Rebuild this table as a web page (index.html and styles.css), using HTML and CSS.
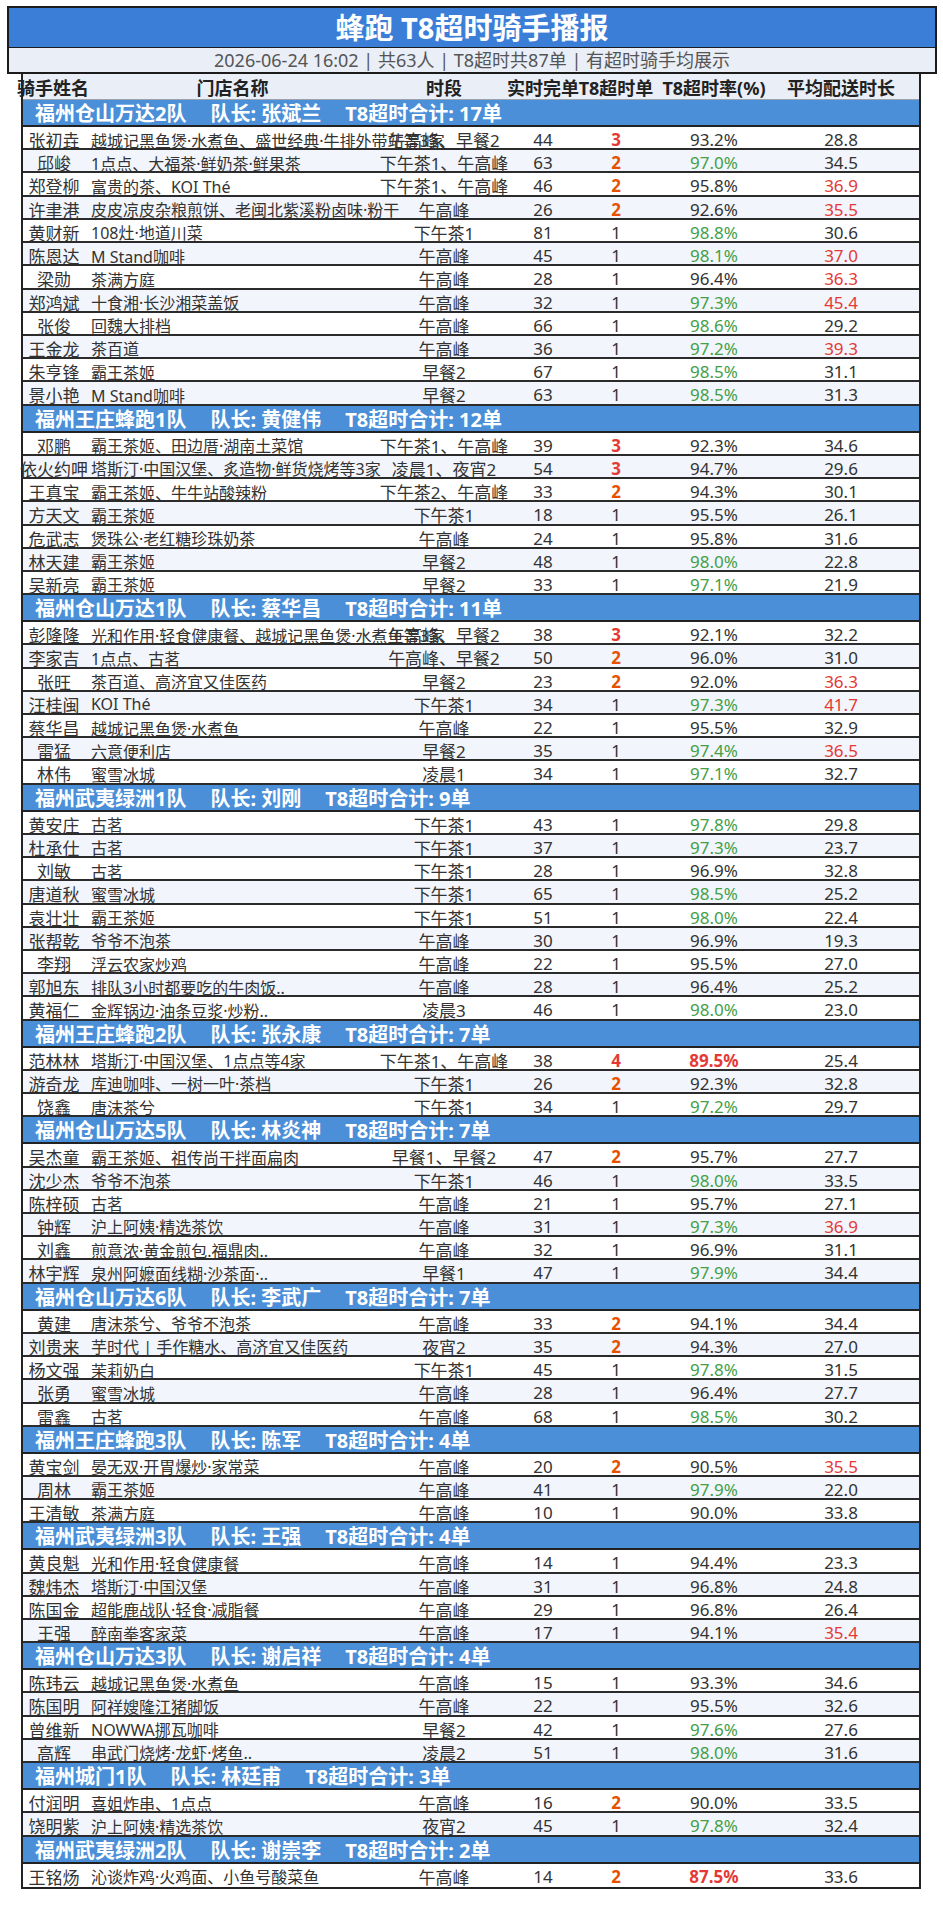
FILE: index.html
```html
<!DOCTYPE html>
<html lang="zh-CN">
<head>
<meta charset="utf-8">
<title>蜂跑 T8超时骑手播报</title>
<link rel="stylesheet" href="styles.css">
</head>
<body>
<div class="report">
  <div class="banner">
    <div class="title">蜂跑 T8超时骑手播报</div>
    <div class="subtitle">2026-06-24 16:02 | 共63人 | T8超时共87单 | 有超时骑手均展示</div>
  </div>
  <div class="table">
    <div class="head">
      <div class="c name"><span>骑手姓名</span></div>
      <div class="c store center"><span>门店名称</span></div>
      <div class="c time"><span>时段</span></div>
      <div class="c done"><span>实时完单</span></div>
      <div class="c t8"><span>T8超时单</span></div>
      <div class="c rate"><span>T8超时率(%)</span></div>
      <div class="c avg"><span>平均配送时长</span></div>
      <div class="c fill"></div>
    </div>

    <div class="group">
      <div class="team"><span>福州仓山万达2队</span><span>队长: 张斌兰</span><span>T8超时合计: 17单</span></div>
      <div class="row"><div class="c name"><span>张初垚</span></div><div class="c store"><span>越城记黑鱼煲·水煮鱼、盛世经典·牛排外带站等3家</span></div><div class="c time"><span>午高峰、早餐2</span></div><div class="c done"><span>44</span></div><div class="c t8 hi"><span>3</span></div><div class="c rate"><span>93.2%</span></div><div class="c avg"><span>28.8</span></div><div class="c fill"></div></div>
      <div class="row"><div class="c name"><span>邱峻</span></div><div class="c store"><span>1点点、大福茶·鲜奶茶·鲜果茶</span></div><div class="c time"><span>下午茶1、午高峰</span></div><div class="c done"><span>63</span></div><div class="c t8 mid"><span>2</span></div><div class="c rate good"><span>97.0%</span></div><div class="c avg"><span>34.5</span></div><div class="c fill"></div></div>
      <div class="row"><div class="c name"><span>郑登柳</span></div><div class="c store"><span>富贵的茶、KOI Thé</span></div><div class="c time"><span>下午茶1、午高峰</span></div><div class="c done"><span>46</span></div><div class="c t8 mid"><span>2</span></div><div class="c rate"><span>95.8%</span></div><div class="c avg late"><span>36.9</span></div><div class="c fill"></div></div>
      <div class="row"><div class="c name"><span>许聿港</span></div><div class="c store"><span>皮皮凉皮杂粮煎饼、老闽北紫溪粉卤味·粉干</span></div><div class="c time"><span>午高峰</span></div><div class="c done"><span>26</span></div><div class="c t8 mid"><span>2</span></div><div class="c rate"><span>92.6%</span></div><div class="c avg late"><span>35.5</span></div><div class="c fill"></div></div>
      <div class="row"><div class="c name"><span>黄财新</span></div><div class="c store"><span>108灶·地道川菜</span></div><div class="c time"><span>下午茶1</span></div><div class="c done"><span>81</span></div><div class="c t8"><span>1</span></div><div class="c rate good"><span>98.8%</span></div><div class="c avg"><span>30.6</span></div><div class="c fill"></div></div>
      <div class="row"><div class="c name"><span>陈恩达</span></div><div class="c store"><span>M Stand咖啡</span></div><div class="c time"><span>午高峰</span></div><div class="c done"><span>45</span></div><div class="c t8"><span>1</span></div><div class="c rate good"><span>98.1%</span></div><div class="c avg late"><span>37.0</span></div><div class="c fill"></div></div>
      <div class="row"><div class="c name"><span>梁勋</span></div><div class="c store"><span>茶满方庭</span></div><div class="c time"><span>午高峰</span></div><div class="c done"><span>28</span></div><div class="c t8"><span>1</span></div><div class="c rate"><span>96.4%</span></div><div class="c avg late"><span>36.3</span></div><div class="c fill"></div></div>
      <div class="row"><div class="c name"><span>郑鸿斌</span></div><div class="c store"><span>十食湘·长沙湘菜盖饭</span></div><div class="c time"><span>午高峰</span></div><div class="c done"><span>32</span></div><div class="c t8"><span>1</span></div><div class="c rate good"><span>97.3%</span></div><div class="c avg late"><span>45.4</span></div><div class="c fill"></div></div>
      <div class="row"><div class="c name"><span>张俊</span></div><div class="c store"><span>回魏大排档</span></div><div class="c time"><span>午高峰</span></div><div class="c done"><span>66</span></div><div class="c t8"><span>1</span></div><div class="c rate good"><span>98.6%</span></div><div class="c avg"><span>29.2</span></div><div class="c fill"></div></div>
      <div class="row"><div class="c name"><span>王金龙</span></div><div class="c store"><span>茶百道</span></div><div class="c time"><span>午高峰</span></div><div class="c done"><span>36</span></div><div class="c t8"><span>1</span></div><div class="c rate good"><span>97.2%</span></div><div class="c avg late"><span>39.3</span></div><div class="c fill"></div></div>
      <div class="row"><div class="c name"><span>朱亨锋</span></div><div class="c store"><span>霸王茶姬</span></div><div class="c time"><span>早餐2</span></div><div class="c done"><span>67</span></div><div class="c t8"><span>1</span></div><div class="c rate good"><span>98.5%</span></div><div class="c avg"><span>31.1</span></div><div class="c fill"></div></div>
      <div class="row"><div class="c name"><span>景小艳</span></div><div class="c store"><span>M Stand咖啡</span></div><div class="c time"><span>早餐2</span></div><div class="c done"><span>63</span></div><div class="c t8"><span>1</span></div><div class="c rate good"><span>98.5%</span></div><div class="c avg"><span>31.3</span></div><div class="c fill"></div></div>
    </div>

    <div class="group">
      <div class="team"><span>福州王庄蜂跑1队</span><span>队长: 黄健伟</span><span>T8超时合计: 12单</span></div>
      <div class="row"><div class="c name"><span>邓鹏</span></div><div class="c store"><span>霸王茶姬、田边厝·湖南土菜馆</span></div><div class="c time"><span>下午茶1、午高峰</span></div><div class="c done"><span>39</span></div><div class="c t8 hi"><span>3</span></div><div class="c rate"><span>92.3%</span></div><div class="c avg"><span>34.6</span></div><div class="c fill"></div></div>
      <div class="row"><div class="c name"><span>依火约呷</span></div><div class="c store"><span>塔斯汀·中国汉堡、炙造物·鲜货烧烤等3家</span></div><div class="c time"><span>凌晨1、夜宵2</span></div><div class="c done"><span>54</span></div><div class="c t8 hi"><span>3</span></div><div class="c rate"><span>94.7%</span></div><div class="c avg"><span>29.6</span></div><div class="c fill"></div></div>
      <div class="row"><div class="c name"><span>王真宝</span></div><div class="c store"><span>霸王茶姬、牛牛站酸辣粉</span></div><div class="c time"><span>下午茶2、午高峰</span></div><div class="c done"><span>33</span></div><div class="c t8 mid"><span>2</span></div><div class="c rate"><span>94.3%</span></div><div class="c avg"><span>30.1</span></div><div class="c fill"></div></div>
      <div class="row"><div class="c name"><span>方天文</span></div><div class="c store"><span>霸王茶姬</span></div><div class="c time"><span>下午茶1</span></div><div class="c done"><span>18</span></div><div class="c t8"><span>1</span></div><div class="c rate"><span>95.5%</span></div><div class="c avg"><span>26.1</span></div><div class="c fill"></div></div>
      <div class="row"><div class="c name"><span>危武志</span></div><div class="c store"><span>煲珠公·老红糖珍珠奶茶</span></div><div class="c time"><span>午高峰</span></div><div class="c done"><span>24</span></div><div class="c t8"><span>1</span></div><div class="c rate"><span>95.8%</span></div><div class="c avg"><span>31.6</span></div><div class="c fill"></div></div>
      <div class="row"><div class="c name"><span>林天建</span></div><div class="c store"><span>霸王茶姬</span></div><div class="c time"><span>早餐2</span></div><div class="c done"><span>48</span></div><div class="c t8"><span>1</span></div><div class="c rate good"><span>98.0%</span></div><div class="c avg"><span>22.8</span></div><div class="c fill"></div></div>
      <div class="row"><div class="c name"><span>吴新亮</span></div><div class="c store"><span>霸王茶姬</span></div><div class="c time"><span>早餐2</span></div><div class="c done"><span>33</span></div><div class="c t8"><span>1</span></div><div class="c rate good"><span>97.1%</span></div><div class="c avg"><span>21.9</span></div><div class="c fill"></div></div>
    </div>

    <div class="group">
      <div class="team"><span>福州仓山万达1队</span><span>队长: 蔡华昌</span><span>T8超时合计: 11单</span></div>
      <div class="row"><div class="c name"><span>彭隆隆</span></div><div class="c store"><span>光和作用·轻食健康餐、越城记黑鱼煲·水煮鱼等3家</span></div><div class="c time"><span>午高峰、早餐2</span></div><div class="c done"><span>38</span></div><div class="c t8 hi"><span>3</span></div><div class="c rate"><span>92.1%</span></div><div class="c avg"><span>32.2</span></div><div class="c fill"></div></div>
      <div class="row"><div class="c name"><span>李家吉</span></div><div class="c store"><span>1点点、古茗</span></div><div class="c time"><span>午高峰、早餐2</span></div><div class="c done"><span>50</span></div><div class="c t8 mid"><span>2</span></div><div class="c rate"><span>96.0%</span></div><div class="c avg"><span>31.0</span></div><div class="c fill"></div></div>
      <div class="row"><div class="c name"><span>张旺</span></div><div class="c store"><span>茶百道、高济宜又佳医药</span></div><div class="c time"><span>早餐2</span></div><div class="c done"><span>23</span></div><div class="c t8 mid"><span>2</span></div><div class="c rate"><span>92.0%</span></div><div class="c avg late"><span>36.3</span></div><div class="c fill"></div></div>
      <div class="row"><div class="c name"><span>汪桂闽</span></div><div class="c store"><span>KOI Thé</span></div><div class="c time"><span>下午茶1</span></div><div class="c done"><span>34</span></div><div class="c t8"><span>1</span></div><div class="c rate good"><span>97.3%</span></div><div class="c avg late"><span>41.7</span></div><div class="c fill"></div></div>
      <div class="row"><div class="c name"><span>蔡华昌</span></div><div class="c store"><span>越城记黑鱼煲·水煮鱼</span></div><div class="c time"><span>午高峰</span></div><div class="c done"><span>22</span></div><div class="c t8"><span>1</span></div><div class="c rate"><span>95.5%</span></div><div class="c avg"><span>32.9</span></div><div class="c fill"></div></div>
      <div class="row"><div class="c name"><span>雷猛</span></div><div class="c store"><span>六意便利店</span></div><div class="c time"><span>早餐2</span></div><div class="c done"><span>35</span></div><div class="c t8"><span>1</span></div><div class="c rate good"><span>97.4%</span></div><div class="c avg late"><span>36.5</span></div><div class="c fill"></div></div>
      <div class="row"><div class="c name"><span>林伟</span></div><div class="c store"><span>蜜雪冰城</span></div><div class="c time"><span>凌晨1</span></div><div class="c done"><span>34</span></div><div class="c t8"><span>1</span></div><div class="c rate good"><span>97.1%</span></div><div class="c avg"><span>32.7</span></div><div class="c fill"></div></div>
    </div>

    <div class="group">
      <div class="team"><span>福州武夷绿洲1队</span><span>队长: 刘刚</span><span>T8超时合计: 9单</span></div>
      <div class="row"><div class="c name"><span>黄安庄</span></div><div class="c store"><span>古茗</span></div><div class="c time"><span>下午茶1</span></div><div class="c done"><span>43</span></div><div class="c t8"><span>1</span></div><div class="c rate good"><span>97.8%</span></div><div class="c avg"><span>29.8</span></div><div class="c fill"></div></div>
      <div class="row"><div class="c name"><span>杜承仕</span></div><div class="c store"><span>古茗</span></div><div class="c time"><span>下午茶1</span></div><div class="c done"><span>37</span></div><div class="c t8"><span>1</span></div><div class="c rate good"><span>97.3%</span></div><div class="c avg"><span>23.7</span></div><div class="c fill"></div></div>
      <div class="row"><div class="c name"><span>刘敏</span></div><div class="c store"><span>古茗</span></div><div class="c time"><span>下午茶1</span></div><div class="c done"><span>28</span></div><div class="c t8"><span>1</span></div><div class="c rate"><span>96.9%</span></div><div class="c avg"><span>32.8</span></div><div class="c fill"></div></div>
      <div class="row"><div class="c name"><span>唐道秋</span></div><div class="c store"><span>蜜雪冰城</span></div><div class="c time"><span>下午茶1</span></div><div class="c done"><span>65</span></div><div class="c t8"><span>1</span></div><div class="c rate good"><span>98.5%</span></div><div class="c avg"><span>25.2</span></div><div class="c fill"></div></div>
      <div class="row"><div class="c name"><span>袁壮壮</span></div><div class="c store"><span>霸王茶姬</span></div><div class="c time"><span>下午茶1</span></div><div class="c done"><span>51</span></div><div class="c t8"><span>1</span></div><div class="c rate good"><span>98.0%</span></div><div class="c avg"><span>22.4</span></div><div class="c fill"></div></div>
      <div class="row"><div class="c name"><span>张帮乾</span></div><div class="c store"><span>爷爷不泡茶</span></div><div class="c time"><span>午高峰</span></div><div class="c done"><span>30</span></div><div class="c t8"><span>1</span></div><div class="c rate"><span>96.9%</span></div><div class="c avg"><span>19.3</span></div><div class="c fill"></div></div>
      <div class="row"><div class="c name"><span>李翔</span></div><div class="c store"><span>浮云农家炒鸡</span></div><div class="c time"><span>午高峰</span></div><div class="c done"><span>22</span></div><div class="c t8"><span>1</span></div><div class="c rate"><span>95.5%</span></div><div class="c avg"><span>27.0</span></div><div class="c fill"></div></div>
      <div class="row"><div class="c name"><span>郭旭东</span></div><div class="c store"><span>排队3小时都要吃的牛肉饭..</span></div><div class="c time"><span>午高峰</span></div><div class="c done"><span>28</span></div><div class="c t8"><span>1</span></div><div class="c rate"><span>96.4%</span></div><div class="c avg"><span>25.2</span></div><div class="c fill"></div></div>
      <div class="row"><div class="c name"><span>黄福仁</span></div><div class="c store"><span>金辉锅边·油条豆浆·炒粉..</span></div><div class="c time"><span>凌晨3</span></div><div class="c done"><span>46</span></div><div class="c t8"><span>1</span></div><div class="c rate good"><span>98.0%</span></div><div class="c avg"><span>23.0</span></div><div class="c fill"></div></div>
    </div>

    <div class="group">
      <div class="team"><span>福州王庄蜂跑2队</span><span>队长: 张永康</span><span>T8超时合计: 7单</span></div>
      <div class="row"><div class="c name"><span>范林林</span></div><div class="c store"><span>塔斯汀·中国汉堡、1点点等4家</span></div><div class="c time"><span>下午茶1、午高峰</span></div><div class="c done"><span>38</span></div><div class="c t8 hi"><span>4</span></div><div class="c rate bad"><span>89.5%</span></div><div class="c avg"><span>25.4</span></div><div class="c fill"></div></div>
      <div class="row"><div class="c name"><span>游奇龙</span></div><div class="c store"><span>库迪咖啡、一树一叶·茶档</span></div><div class="c time"><span>下午茶1</span></div><div class="c done"><span>26</span></div><div class="c t8 mid"><span>2</span></div><div class="c rate"><span>92.3%</span></div><div class="c avg"><span>32.8</span></div><div class="c fill"></div></div>
      <div class="row"><div class="c name"><span>饶鑫</span></div><div class="c store"><span>唐沫茶兮</span></div><div class="c time"><span>下午茶1</span></div><div class="c done"><span>34</span></div><div class="c t8"><span>1</span></div><div class="c rate good"><span>97.2%</span></div><div class="c avg"><span>29.7</span></div><div class="c fill"></div></div>
    </div>

    <div class="group">
      <div class="team"><span>福州仓山万达5队</span><span>队长: 林炎神</span><span>T8超时合计: 7单</span></div>
      <div class="row"><div class="c name"><span>吴杰童</span></div><div class="c store"><span>霸王茶姬、祖传尚干拌面扁肉</span></div><div class="c time"><span>早餐1、早餐2</span></div><div class="c done"><span>47</span></div><div class="c t8 mid"><span>2</span></div><div class="c rate"><span>95.7%</span></div><div class="c avg"><span>27.7</span></div><div class="c fill"></div></div>
      <div class="row"><div class="c name"><span>沈少杰</span></div><div class="c store"><span>爷爷不泡茶</span></div><div class="c time"><span>下午茶1</span></div><div class="c done"><span>46</span></div><div class="c t8"><span>1</span></div><div class="c rate good"><span>98.0%</span></div><div class="c avg"><span>33.5</span></div><div class="c fill"></div></div>
      <div class="row"><div class="c name"><span>陈梓硕</span></div><div class="c store"><span>古茗</span></div><div class="c time"><span>午高峰</span></div><div class="c done"><span>21</span></div><div class="c t8"><span>1</span></div><div class="c rate"><span>95.7%</span></div><div class="c avg"><span>27.1</span></div><div class="c fill"></div></div>
      <div class="row"><div class="c name"><span>钟辉</span></div><div class="c store"><span>沪上阿姨·精选茶饮</span></div><div class="c time"><span>午高峰</span></div><div class="c done"><span>31</span></div><div class="c t8"><span>1</span></div><div class="c rate good"><span>97.3%</span></div><div class="c avg late"><span>36.9</span></div><div class="c fill"></div></div>
      <div class="row"><div class="c name"><span>刘鑫</span></div><div class="c store"><span>煎意浓·黄金煎包.福鼎肉..</span></div><div class="c time"><span>午高峰</span></div><div class="c done"><span>32</span></div><div class="c t8"><span>1</span></div><div class="c rate"><span>96.9%</span></div><div class="c avg"><span>31.1</span></div><div class="c fill"></div></div>
      <div class="row"><div class="c name"><span>林宇辉</span></div><div class="c store"><span>泉州阿嬷面线糊·沙茶面·..</span></div><div class="c time"><span>早餐1</span></div><div class="c done"><span>47</span></div><div class="c t8"><span>1</span></div><div class="c rate good"><span>97.9%</span></div><div class="c avg"><span>34.4</span></div><div class="c fill"></div></div>
    </div>

    <div class="group">
      <div class="team"><span>福州仓山万达6队</span><span>队长: 李武广</span><span>T8超时合计: 7单</span></div>
      <div class="row"><div class="c name"><span>黄建</span></div><div class="c store"><span>唐沫茶兮、爷爷不泡茶</span></div><div class="c time"><span>午高峰</span></div><div class="c done"><span>33</span></div><div class="c t8 mid"><span>2</span></div><div class="c rate"><span>94.1%</span></div><div class="c avg"><span>34.4</span></div><div class="c fill"></div></div>
      <div class="row"><div class="c name"><span>刘贵来</span></div><div class="c store"><span>芋时代 | 手作糖水、高济宜又佳医药</span></div><div class="c time"><span>夜宵2</span></div><div class="c done"><span>35</span></div><div class="c t8 mid"><span>2</span></div><div class="c rate"><span>94.3%</span></div><div class="c avg"><span>27.0</span></div><div class="c fill"></div></div>
      <div class="row"><div class="c name"><span>杨文强</span></div><div class="c store"><span>茉莉奶白</span></div><div class="c time"><span>下午茶1</span></div><div class="c done"><span>45</span></div><div class="c t8"><span>1</span></div><div class="c rate good"><span>97.8%</span></div><div class="c avg"><span>31.5</span></div><div class="c fill"></div></div>
      <div class="row"><div class="c name"><span>张勇</span></div><div class="c store"><span>蜜雪冰城</span></div><div class="c time"><span>午高峰</span></div><div class="c done"><span>28</span></div><div class="c t8"><span>1</span></div><div class="c rate"><span>96.4%</span></div><div class="c avg"><span>27.7</span></div><div class="c fill"></div></div>
      <div class="row"><div class="c name"><span>雷鑫</span></div><div class="c store"><span>古茗</span></div><div class="c time"><span>午高峰</span></div><div class="c done"><span>68</span></div><div class="c t8"><span>1</span></div><div class="c rate good"><span>98.5%</span></div><div class="c avg"><span>30.2</span></div><div class="c fill"></div></div>
    </div>

    <div class="group">
      <div class="team"><span>福州王庄蜂跑3队</span><span>队长: 陈军</span><span>T8超时合计: 4单</span></div>
      <div class="row"><div class="c name"><span>黄宝剑</span></div><div class="c store"><span>晏无双·开胃爆炒·家常菜</span></div><div class="c time"><span>午高峰</span></div><div class="c done"><span>20</span></div><div class="c t8 mid"><span>2</span></div><div class="c rate"><span>90.5%</span></div><div class="c avg late"><span>35.5</span></div><div class="c fill"></div></div>
      <div class="row"><div class="c name"><span>周林</span></div><div class="c store"><span>霸王茶姬</span></div><div class="c time"><span>午高峰</span></div><div class="c done"><span>41</span></div><div class="c t8"><span>1</span></div><div class="c rate good"><span>97.9%</span></div><div class="c avg"><span>22.0</span></div><div class="c fill"></div></div>
      <div class="row"><div class="c name"><span>王清敏</span></div><div class="c store"><span>茶满方庭</span></div><div class="c time"><span>午高峰</span></div><div class="c done"><span>10</span></div><div class="c t8"><span>1</span></div><div class="c rate"><span>90.0%</span></div><div class="c avg"><span>33.8</span></div><div class="c fill"></div></div>
    </div>

    <div class="group">
      <div class="team"><span>福州武夷绿洲3队</span><span>队长: 王强</span><span>T8超时合计: 4单</span></div>
      <div class="row"><div class="c name"><span>黄良魁</span></div><div class="c store"><span>光和作用·轻食健康餐</span></div><div class="c time"><span>午高峰</span></div><div class="c done"><span>14</span></div><div class="c t8"><span>1</span></div><div class="c rate"><span>94.4%</span></div><div class="c avg"><span>23.3</span></div><div class="c fill"></div></div>
      <div class="row"><div class="c name"><span>魏炜杰</span></div><div class="c store"><span>塔斯汀·中国汉堡</span></div><div class="c time"><span>午高峰</span></div><div class="c done"><span>31</span></div><div class="c t8"><span>1</span></div><div class="c rate"><span>96.8%</span></div><div class="c avg"><span>24.8</span></div><div class="c fill"></div></div>
      <div class="row"><div class="c name"><span>陈国金</span></div><div class="c store"><span>超能鹿战队·轻食·减脂餐</span></div><div class="c time"><span>午高峰</span></div><div class="c done"><span>29</span></div><div class="c t8"><span>1</span></div><div class="c rate"><span>96.8%</span></div><div class="c avg"><span>26.4</span></div><div class="c fill"></div></div>
      <div class="row"><div class="c name"><span>王强</span></div><div class="c store"><span>醉南拳客家菜</span></div><div class="c time"><span>午高峰</span></div><div class="c done"><span>17</span></div><div class="c t8"><span>1</span></div><div class="c rate"><span>94.1%</span></div><div class="c avg late"><span>35.4</span></div><div class="c fill"></div></div>
    </div>

    <div class="group">
      <div class="team"><span>福州仓山万达3队</span><span>队长: 谢启祥</span><span>T8超时合计: 4单</span></div>
      <div class="row"><div class="c name"><span>陈玮云</span></div><div class="c store"><span>越城记黑鱼煲·水煮鱼</span></div><div class="c time"><span>午高峰</span></div><div class="c done"><span>15</span></div><div class="c t8"><span>1</span></div><div class="c rate"><span>93.3%</span></div><div class="c avg"><span>34.6</span></div><div class="c fill"></div></div>
      <div class="row"><div class="c name"><span>陈国明</span></div><div class="c store"><span>阿祥嫂隆江猪脚饭</span></div><div class="c time"><span>午高峰</span></div><div class="c done"><span>22</span></div><div class="c t8"><span>1</span></div><div class="c rate"><span>95.5%</span></div><div class="c avg"><span>32.6</span></div><div class="c fill"></div></div>
      <div class="row"><div class="c name"><span>曾维新</span></div><div class="c store"><span>NOWWA挪瓦咖啡</span></div><div class="c time"><span>早餐2</span></div><div class="c done"><span>42</span></div><div class="c t8"><span>1</span></div><div class="c rate good"><span>97.6%</span></div><div class="c avg"><span>27.6</span></div><div class="c fill"></div></div>
      <div class="row"><div class="c name"><span>高辉</span></div><div class="c store"><span>串武门烧烤·龙虾·烤鱼..</span></div><div class="c time"><span>凌晨2</span></div><div class="c done"><span>51</span></div><div class="c t8"><span>1</span></div><div class="c rate good"><span>98.0%</span></div><div class="c avg"><span>31.6</span></div><div class="c fill"></div></div>
    </div>

    <div class="group">
      <div class="team"><span>福州城门1队</span><span>队长: 林廷甫</span><span>T8超时合计: 3单</span></div>
      <div class="row"><div class="c name"><span>付润明</span></div><div class="c store"><span>喜姐炸串、1点点</span></div><div class="c time"><span>午高峰</span></div><div class="c done"><span>16</span></div><div class="c t8 mid"><span>2</span></div><div class="c rate"><span>90.0%</span></div><div class="c avg"><span>33.5</span></div><div class="c fill"></div></div>
      <div class="row"><div class="c name"><span>饶明紫</span></div><div class="c store"><span>沪上阿姨·精选茶饮</span></div><div class="c time"><span>夜宵2</span></div><div class="c done"><span>45</span></div><div class="c t8"><span>1</span></div><div class="c rate good"><span>97.8%</span></div><div class="c avg"><span>32.4</span></div><div class="c fill"></div></div>
    </div>

    <div class="group">
      <div class="team"><span>福州武夷绿洲2队</span><span>队长: 谢崇李</span><span>T8超时合计: 2单</span></div>
      <div class="row"><div class="c name"><span>王铭炀</span></div><div class="c store"><span>沁谈炸鸡·火鸡面、小鱼号酸菜鱼</span></div><div class="c time"><span>午高峰</span></div><div class="c done"><span>14</span></div><div class="c t8 mid"><span>2</span></div><div class="c rate bad"><span>87.5%</span></div><div class="c avg"><span>33.6</span></div><div class="c fill"></div></div>
    </div>
  </div>
</div>
</body>
</html>
```

FILE: styles.css
```css
* { box-sizing: border-box; }
html, body { margin: 0; padding: 0; background: #ffffff; }
body {
  font-family: "Noto Sans", "Noto Sans CJK SC", sans-serif;
  color: #333333;
  width: 943px;
  height: 1928px;
}
.report {
  padding: 6px 0 0 7px;
}
.banner {
  width: 930px;
  border: 2px solid #1c1c1c;
}
.title {
  height: 40px;
  background: #3b7ed8;
  color: #ffffff;
  font-weight: 700;
  font-size: 29px;
  line-height: 40px;
  text-align: center;
  border-bottom: 1px solid #1c1c1c;
}
.subtitle {
  height: 24px;
  background: #e9eef7;
  color: #555555;
  font-size: 18px;
  line-height: 24px;
  text-align: center;
}
.table {
  margin-left: 14px;
  width: 900px;
  border-left: 2px solid #222222;
  border-right: 2px solid #222222;
  border-bottom: 2px solid #222222;
}
.head, .row {
  display: grid;
  grid-template-columns: 62px 295px 128px 70px 76px 120px 134px 11px;
}
.head {
  height: 26px;
  background: #e9eef7;
  border-bottom: 1px solid #9aa3b0;
  font-weight: 700;
  font-size: 18px;
  color: #222222;
}
.c {
  display: flex;
  align-items: center;
  justify-content: center;
  min-width: 0;
  white-space: nowrap;
}
.c span { white-space: nowrap; }
.head .name { margin-left: -2px; }
.row .store { justify-content: flex-start; padding-left: 6px; font-size: 16px; }
.head .store { justify-content: center; }
.team {
  height: 27px;
  background: #4a8fd8;
  color: #ffffff;
  font-weight: 700;
  font-size: 20px;
  display: flex;
  align-items: center;
  gap: 24px;
  padding-left: 12px;
  border-bottom: 2px solid #222222;
  white-space: nowrap;
}
.row {
  height: 23.22px;
  background: #ffffff;
  font-size: 17px;
  border-bottom: 2px solid #2b2b2b;
}
.group .row:nth-child(odd) { background: #f2f5fb; }
.group:last-child .row:last-child { border-bottom: none; }
.t8.hi { color: #e53935; font-weight: 700; }
.t8.mid { color: #e65100; font-weight: 700; }
.rate.good { color: #43a047; }
.rate.bad { color: #e53935; font-weight: 700; }
.avg.late { color: #e53935; }
```
